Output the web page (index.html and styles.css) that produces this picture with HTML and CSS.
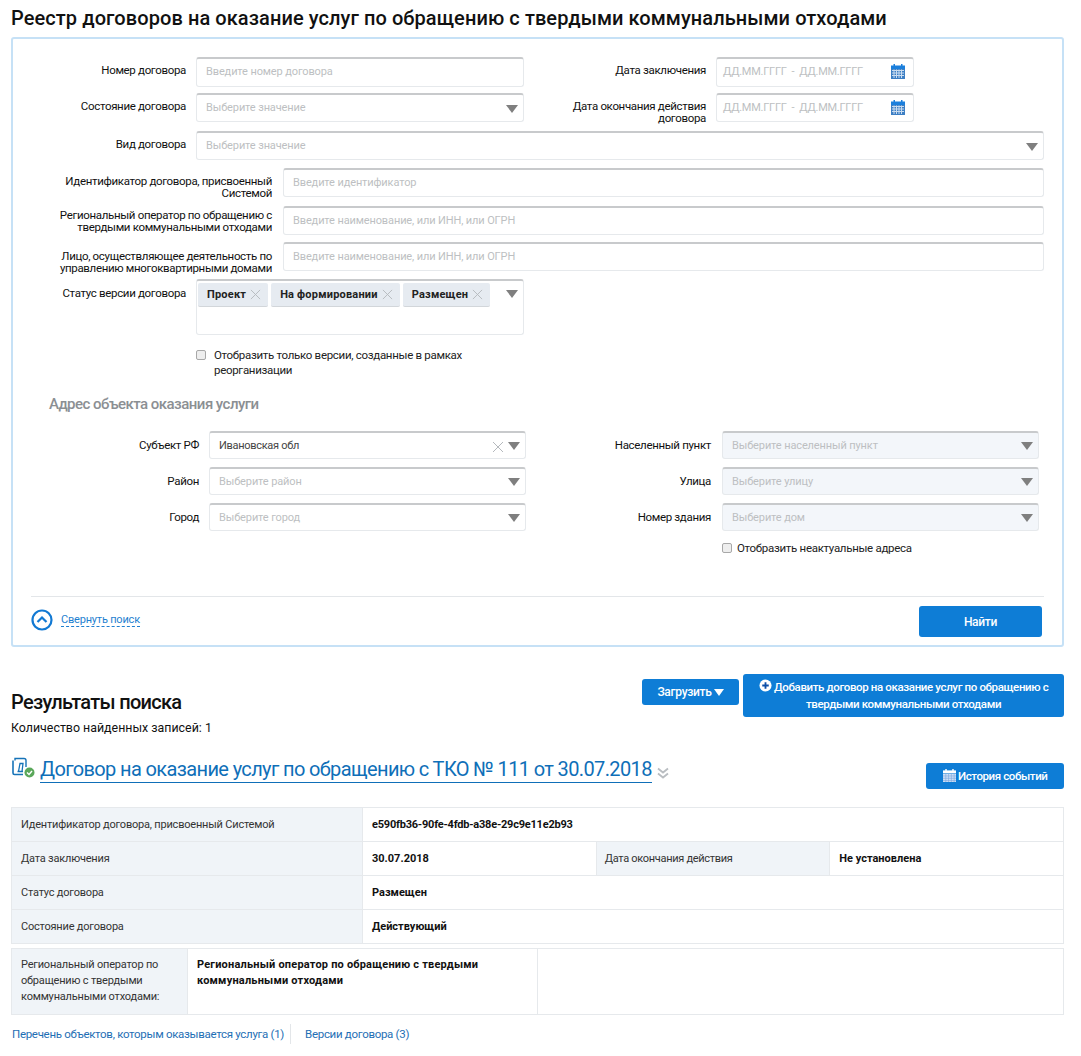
FILE: index.html
```html
<!DOCTYPE html>
<html lang="ru">

<head>
    <meta charset="UTF-8">
    <meta name="viewport" content="width=device-width, initial-scale=1.0">
    <title>Реестр договоров</title>
    <link rel="stylesheet" href="styles.css">
</head>

<body>
    <svg class="sprite" width="0" height="0">
        <symbol id="cal" viewBox="0 0 14 15">
            <rect x="2.500" y="0" width="1.500" height="3" fill="#1b7fdc"/>
            <rect x="10" y="0" width="1.500" height="3" fill="#1b7fdc"/>
            <rect x="0" y="1.500" width="14" height="3.500" fill="#1b7fdc"/>
            <rect x="0" y="5" width="14" height="10" fill="#3d7fc4"/>
            <path d="M1 6.500h12M1 9h12M1 11.500h12M3 5.500v8.500M5.500 5.500v8.500M8 5.500v8.500M10.500 5.500v8.500" stroke="#c9dcf0" stroke-width="1" fill="none"/>
        </symbol>
        <symbol id="x" viewBox="0 0 12 12">
            <path d="M1 1l10 10M11 1L1 11" stroke="#b5b9bd" stroke-width="1" fill="none"/>
        </symbol>
    </svg>

    <h1 class="page-title">Реестр договоров на оказание услуг по обращению с твердыми коммунальными отходами</h1>

    <form class="search-panel">
        <div class="row row-first">
            <label class="lbl lbl-main">Номер договора</label>
            <div class="inp inp-half"><span class="ph">Введите номер договора</span></div>
            <label class="lbl lbl-date">Дата заключения</label>
            <div class="inp inp-date">
                <span class="ph">ДД.ММ.ГГГГ &nbsp;-&nbsp; ДД.ММ.ГГГГ</span>
                <svg class="cal-ico"><use href="#cal"/></svg>
            </div>
        </div>
        <div class="row row-2">
            <label class="lbl lbl-main">Состояние договора</label>
            <div class="inp inp-half"><span class="ph">Выберите значение</span><i class="arrow"></i></div>
            <label class="lbl lbl-date">Дата окончания действия договора</label>
            <div class="inp inp-date">
                <span class="ph">ДД.ММ.ГГГГ &nbsp;-&nbsp; ДД.ММ.ГГГГ</span>
                <svg class="cal-ico"><use href="#cal"/></svg>
            </div>
        </div>
        <div class="row row-3">
            <label class="lbl lbl-main">Вид договора</label>
            <div class="inp inp-grow"><span class="ph">Выберите значение</span><i class="arrow"></i></div>
        </div>
        <div class="row row-4">
            <label class="lbl lbl-wide">Идентификатор договора, присвоенный Системой</label>
            <div class="inp inp-grow"><span class="ph">Введите идентификатор</span></div>
        </div>
        <div class="row row-5">
            <label class="lbl lbl-wide">Региональный оператор по обращению с твердыми коммунальными отходами</label>
            <div class="inp inp-grow"><span class="ph">Введите наименование, или ИНН, или ОГРН</span></div>
        </div>
        <div class="row row-6">
            <label class="lbl lbl-wide">Лицо, осуществляющее деятельность по управлению многоквартирными домами</label>
            <div class="inp inp-grow"><span class="ph">Введите наименование, или ИНН, или ОГРН</span></div>
        </div>
        <div class="row row-7">
            <label class="lbl lbl-main">Статус версии договора</label>
            <div class="inp inp-half inp-tags">
                <span class="tag">Проект<svg class="tag-x"><use href="#x"/></svg></span>
                <span class="tag">На формировании<svg class="tag-x"><use href="#x"/></svg></span>
                <span class="tag">Размещен<svg class="tag-x"><use href="#x"/></svg></span>
                <i class="arrow arrow-tags"></i>
            </div>
        </div>
        <div class="check-row">
            <span class="chk"></span>
            <span class="chk-text">Отобразить только версии, созданные в рамках реорганизации</span>
        </div>

        <h3 class="addr-title">Адрес объекта оказания услуги</h3>

        <div class="addr-grid">
            <label class="lbl">Субъект РФ</label>
            <div class="inp"><span class="val">Ивановская обл</span><svg class="clear-x"><use href="#x"/></svg><i class="arrow"></i></div>
            <label class="lbl lbl-r">Населенный пункт</label>
            <div class="inp inp-off"><span class="ph">Выберите населенный пункт</span><i class="arrow"></i></div>

            <label class="lbl">Район</label>
            <div class="inp"><span class="ph">Выберите район</span><i class="arrow"></i></div>
            <label class="lbl lbl-r">Улица</label>
            <div class="inp inp-off"><span class="ph">Выберите улицу</span><i class="arrow"></i></div>

            <label class="lbl">Город</label>
            <div class="inp"><span class="ph">Выберите город</span><i class="arrow"></i></div>
            <label class="lbl lbl-r">Номер здания</label>
            <div class="inp inp-off"><span class="ph">Выберите дом</span><i class="arrow"></i></div>
        </div>
        <div class="check-row check-row-addr">
            <span class="chk"></span>
            <span class="chk-text">Отобразить неактуальные адреса</span>
        </div>

        <div class="panel-foot">
            <a class="collapse" href="#">
                <svg class="collapse-ico" viewBox="0 0 22 22">
                    <circle cx="11" cy="11" r="9.500" fill="none" stroke="#1279d3" stroke-width="2.200"/>
                    <path d="M6.500 13l4.500-4.500 4.500 4.500" fill="none" stroke="#1279d3" stroke-width="2.200"/>
                </svg>
                <span class="collapse-text">Свернуть поиск</span>
            </a>
            <button class="btn btn-find" type="button">Найти</button>
        </div>
    </form>

    <div class="results-head">
        <div>
            <h2 class="results-title">Результаты поиска</h2>
            <div class="results-count">Количество найденных записей: 1</div>
        </div>
        <div class="results-actions">
            <button class="btn btn-load" type="button">Загрузить<i class="arrow-w"></i></button>
            <button class="btn btn-add" type="button">
                <svg class="plus-ico" viewBox="0 0 14 14">
                    <circle cx="7" cy="7" r="6.500" fill="#fff"/>
                    <path d="M7 3.500v7M3.500 7h7" stroke="#0d4fa8" stroke-width="2"/>
                </svg>
                Добавить договор на оказание услуг по обращению с твердыми коммунальными отходами
            </button>
        </div>
    </div>

    <div class="contract-head">
        <svg class="doc-ico" viewBox="0 0 24 22">
            <path d="M3 3.500V1.500h9a2 2 0 0 1 2 2V10" fill="none" stroke="#1673b8" stroke-width="1.400"/>
            <path d="M11 17.500H2.500a1.500 1.500 0 0 1-1.500-1.500V3.500" fill="none" stroke="#1673b8" stroke-width="1.600"/>
            <path d="M6.500 14.500l1.500-8h3l-1 8M5.500 14.500h5.500" fill="none" stroke="#1673b8" stroke-width="1.300"/>
            <circle cx="17.500" cy="15.500" r="5" fill="#5aa75a"/>
            <path d="M15 15.500l2 2 3-3.500" fill="none" stroke="#fff" stroke-width="1.400"/>
        </svg>
        <a class="contract-link" href="#">Договор на оказание услуг по обращению с ТКО № 111 от 30.07.2018</a>
        <svg class="more-ico" viewBox="0 0 12 12">
            <path d="M1 1.500l5 4 5-4M1 6.500l5 4 5-4" fill="none" stroke="#b9bdc1" stroke-width="1.800"/>
        </svg>
        <button class="btn btn-hist" type="button">
            <svg class="hist-ico" viewBox="0 0 14 14">
                <rect x="2.500" y="0" width="1.500" height="3" fill="#fff"/>
                <rect x="10" y="0" width="1.500" height="3" fill="#fff"/>
                <rect x="0" y="1.500" width="14" height="3" fill="#fff"/>
                <rect x="0" y="5" width="14" height="9" fill="#cfe0f5"/>
                <path d="M0 7.500h14M0 10h14M0 12.500h14M3 5v9M6 5v9M9 5v9M12 5v9" stroke="#7fa8e0" stroke-width="0.700"/>
            </svg>
            История событий
        </button>
    </div>

    <table class="info">
        <tr>
            <th>Идентификатор договора, присвоенный Системой</th>
            <td class="cell-uid" colspan="3">e590fb36-90fe-4fdb-a38e-29c9e11e2b93</td>
        </tr>
        <tr>
            <th>Дата заключения</th>
            <td class="cell-date">30.07.2018</td>
            <th class="th-end">Дата окончания действия</th>
            <td>Не установлена</td>
        </tr>
        <tr>
            <th>Статус договора</th>
            <td colspan="3">Размещен</td>
        </tr>
        <tr>
            <th>Состояние договора</th>
            <td colspan="3">Действующий</td>
        </tr>
    </table>

    <table class="info info-op">
        <tr>
            <th>Региональный оператор по обращению с твердыми коммунальными отходами:</th>
            <td class="op-name">Региональный оператор по обращению с твердыми коммунальными отходами</td>
            <td></td>
        </tr>
    </table>

    <nav class="tabs">
        <a class="tab" href="#">Перечень объектов, которым оказывается услуга (1)</a>
        <a class="tab" href="#">Версии договора (3)</a>
    </nav>
</body>
</html>
```

FILE: styles.css
```css
body {
    margin: 0;
    padding: 0 17px 0 11px;
    font-family: Roboto, 'Liberation Sans', sans-serif;
    font-size: 12px;
    color: #111;
    background: #fff;
}

.sprite {
    position: absolute;
}

.page-title {
    margin: 0;
    padding-top: 5px;
    height: 32px;
    font-size: 20px;
    line-height: 26px;
    font-weight: 500;
    letter-spacing: 0.08px;
    color: #111;
    white-space: nowrap;
}

.search-panel {
    box-sizing: border-box;
    height: 610px;
    padding: 18px 18px 0;
    border: 2px solid #c6e1f6;
    border-radius: 3px;
}

.row {
    display: flex;
    align-items: flex-start;
}

.row-first .inp { height: 30px; }
.row-2 { margin-top: 6px; height: 29px; }
.row-3 { margin-top: 9px; }
.row-4 { margin-top: 8px; height: 29px; }
.row-5 { margin-top: 9px; height: 29px; }
.row-6 { margin-top: 7px; height: 29px; }
.row-7 { margin-top: 8px; }

.lbl {
    box-sizing: border-box;
    padding-top: 7px;
    font-size: 11.500px;
    line-height: 12px;
    letter-spacing: -0.33px;
    text-align: right;
    color: #111;
}

.lbl-main {
    width: 155px;
    margin-right: 10px;
}

.lbl-date {
    width: 182px;
    margin-right: 10px;
}

.lbl-wide {
    width: 241px;
    margin-right: 11px;
}

.row-5 .lbl { padding-top: 3px; }
.row-6 .lbl { padding-top: 8px; }
.row-7 .lbl { padding-top: 8px; }

.inp {
    box-sizing: border-box;
    position: relative;
    height: 29px;
    padding: 0 9px;
    border: 1px solid #e6e9ec;
    border-top: 2px solid #c8cacc;
    border-radius: 3px;
    line-height: 26px;
    font-size: 11px;
    letter-spacing: -0.12px;
    background: #fff;
}

.inp-half { width: 328px; }
.inp-date { width: 198px; padding-left: 6px; letter-spacing: -0.25px; }
.inp-grow { flex: 1; }
.inp-off { background: #f3f6fa; }

.ph {
    color: #bdbfc2;
}

.val {
    color: #444;
    letter-spacing: -0.3px;
}

.arrow {
    position: absolute;
    top: 10px;
    right: 5px;
    border-left: 6.500px solid transparent;
    border-right: 6.500px solid transparent;
    border-top: 8px solid #7f7f7f;
}

.cal-ico {
    position: absolute;
    top: 5px;
    right: 8px;
    width: 14px;
    height: 15px;
}

.clear-x {
    position: absolute;
    top: 8px;
    right: 21px;
    width: 12px;
    height: 12px;
}

.inp-tags {
    display: flex;
    gap: 3px;
    height: 56px;
    padding: 2px 0 0 1px;
    align-items: flex-start;
}

.tag {
    display: flex;
    align-items: center;
    box-sizing: border-box;
    height: 24px;
    padding: 0 7px 0 9px;
    border-bottom: 1px solid #d2d6da;
    border-radius: 2px;
    background: #e6ebf1;
    font-weight: 700;
    font-size: 11px;
    letter-spacing: 0.2px;
    color: #222;
}

.tag-x {
    width: 11px;
    height: 11px;
    margin-left: 4px;
}

.arrow-tags {
    top: 9px;
}

.check-row {
    display: flex;
    align-items: flex-start;
    gap: 8px;
    margin: 13px 0 0 165px;
    width: 290px;
}

.chk {
    flex: none;
    box-sizing: border-box;
    width: 10px;
    height: 10px;
    margin-top: 2px;
    border: 1px solid #a8a8a8;
    border-radius: 2px;
    background: #eee;
}

.chk-text {
    font-size: 11.500px;
    line-height: 15px;
    letter-spacing: -0.3px;
    color: #222;
}

.addr-title {
    margin: 16px 0 0 18px;
    font-size: 15px;
    line-height: 20px;
    font-weight: 500;
    letter-spacing: -0.53px;
    color: #8b8f93;
}

.addr-grid {
    display: grid;
    grid-template-columns: 168px 317px 176px 317px;
    column-gap: 10px;
    row-gap: 8px;
    margin-top: 17px;
}

.addr-grid .lbl {
    padding-top: 8px;
}

.addr-grid .lbl-r {
    padding-right: 1px;
}

.addr-grid .inp {
    height: 28px;
}

.addr-grid .inp .arrow {
    top: 9px;
}

.check-row-addr {
    margin: 10px 0 0 691px;
    width: auto;
    gap: 5px;
}

.panel-foot {
    display: flex;
    justify-content: space-between;
    align-items: center;
    margin-top: 40px;
    padding: 9px 2px 0 0;
    border-top: 1px solid #e3e6e9;
}

.collapse {
    display: flex;
    align-items: center;
    gap: 8px;
    padding-bottom: 3px;
    text-decoration: none;
}

.collapse-ico {
    width: 22px;
    height: 22px;
}

.collapse-text {
    font-size: 11px;
    line-height: 13px;
    letter-spacing: -0.2px;
    color: #1f7fd0;
    border-bottom: 1px dashed #1f7fd0;
}

.btn {
    border: 0;
    border-radius: 3px;
    background: #0e7dd6;
    color: #fff;
    font-family: inherit;
    font-size: 12px;
    font-weight: 500;
    letter-spacing: -0.3px;
}

.btn-find {
    width: 123px;
    height: 31px;
}

.results-head {
    display: flex;
    justify-content: space-between;
    align-items: flex-start;
    margin-top: 27px;
}

.results-title {
    margin: 16px 0 0;
    font-size: 20px;
    line-height: 24px;
    font-weight: 500;
    letter-spacing: -0.7px;
    color: #111;
}

.results-count {
    margin-top: 6px;
    font-size: 12.400px;
    line-height: 16px;
}

.results-actions {
    display: flex;
    align-items: flex-start;
    gap: 4px;
}

.btn-load {
    width: 97px;
    height: 26px;
    margin-top: 5px;
}

.arrow-w {
    display: inline-block;
    margin-left: 2px;
    border-left: 5.500px solid transparent;
    border-right: 5.500px solid transparent;
    border-top: 7px solid #fff;
}

.btn-add {
    width: 321px;
    height: 43px;
    line-height: 17px;
    padding: 0 8px;
    font-size: 11.500px;
    letter-spacing: -0.37px;
}

.plus-ico {
    width: 13px;
    height: 13px;
    vertical-align: -1px;
}

.contract-head {
    display: flex;
    align-items: flex-start;
    margin-top: 20px;
    height: 51px;
}

.doc-ico {
    width: 24px;
    height: 22px;
    margin: 1px 4px 0 1px;
}

.contract-link {
    font-size: 20px;
    line-height: 26px;
    letter-spacing: -0.63px;
    color: #0f6fb8;
    text-decoration: none;
    border-bottom: 1px solid #0f6fb8;
}

.more-ico {
    width: 12px;
    height: 12px;
    margin: 11px 0 0 5px;
}

.btn-hist {
    width: 138px;
    height: 26px;
    margin: 7px 0 0 auto;
    font-size: 11.500px;
    letter-spacing: -0.4px;
}

.hist-ico {
    width: 13px;
    height: 13px;
    vertical-align: -2px;
}

.info {
    width: 100%;
    border-collapse: collapse;
    table-layout: fixed;
    font-size: 11px;
}

.info th,
.info td {
    height: 33px;
    padding: 0 9px;
    border: 1px solid #e6e9ec;
    text-align: left;
    vertical-align: middle;
}

.info th {
    width: 332px;
    background: #f0f4f8;
    font-weight: 400;
    letter-spacing: -0.2px;
    color: #333;
}

.info td {
    font-weight: 700;
    color: #111;
}

.info .cell-uid {
    letter-spacing: -0.22px;
}

.info .cell-date {
    width: 214px;
}

.info .th-end {
    width: 215px;
    padding-left: 8px;
    letter-spacing: -0.3px;
}

.info-op {
    margin-top: 4px;
}

.info-op th,
.info-op td {
    height: 57px;
    vertical-align: top;
    padding-top: 8px;
    line-height: 16px;
}

.info-op th {
    width: 157px;
}

.info-op .op-name {
    width: 331px;
    letter-spacing: 0.2px;
}

.tabs {
    display: flex;
    margin: 9px 0 0 1px;
}

.tab {
    padding-right: 6px;
    font-size: 11.500px;
    line-height: 20px;
    letter-spacing: -0.3px;
    color: #1f6fb5;
    text-decoration: none;
}

.tab + .tab {
    padding-left: 14px;
    border-left: 1px solid #e3e6e9;
}
```
